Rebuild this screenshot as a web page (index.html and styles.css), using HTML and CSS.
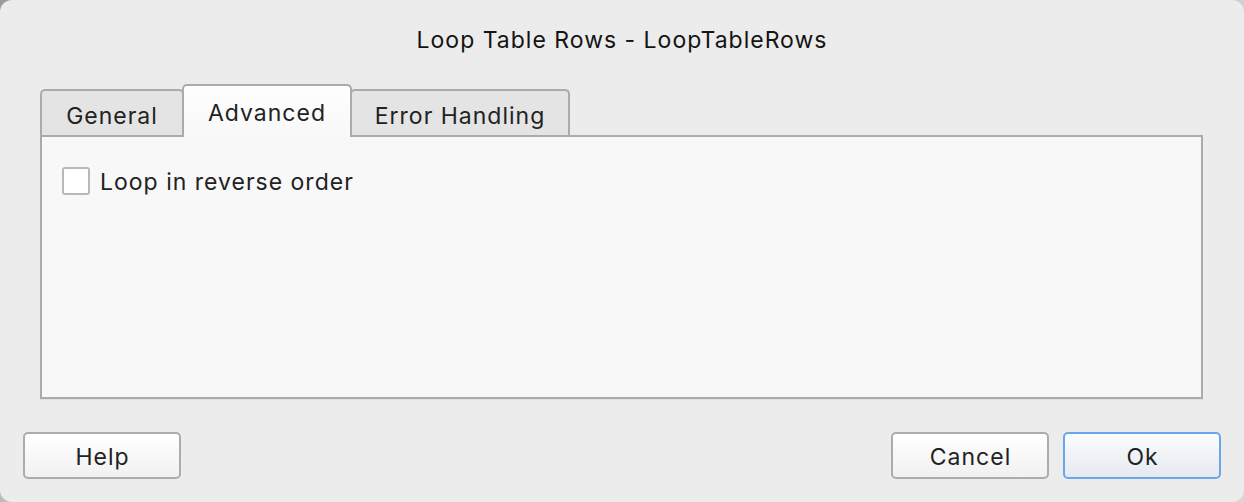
FILE: index.html
```html
<!DOCTYPE html>
<html>
<head>
<meta charset="utf-8">
<link rel="stylesheet" href="styles.css">
</head>
<body>
<div class="window">
  <div class="title">Loop Table Rows - LoopTableRows</div>
  <div class="tabbar">
    <div class="tab tab-general">General</div>
    <div class="tab tab-active">Advanced</div>
    <div class="tab tab-error">Error Handling</div>
  </div>
  <div class="panel">
    <label class="check">
      <span class="box"></span>
      <span class="check-label">Loop in reverse order</span>
    </label>
  </div>
  <div class="footer">
    <button class="btn">Help</button>
    <div class="spacer"></div>
    <button class="btn">Cancel</button>
    <button class="btn btn-default">Ok</button>
  </div>
</div>
</body>
</html>
```

FILE: styles.css
```css
html, body {
  margin: 0;
  padding: 0;
}
body {
  width: 1244px;
  height: 502px;
  background: linear-gradient(135deg, #9c9c9c 0%, #c8c8c8 40%, #d6d6d6 100%);
  font-family: "Inter", "Liberation Sans", sans-serif;
  overflow: hidden;
}
.window {
  width: 1244px;
  height: 502px;
  background: #ececec;
  border-radius: 12px;
  box-sizing: border-box;
  display: flex;
  flex-direction: column;
  letter-spacing: 1px;
}
.title {
  height: 58px;
  padding-top: 26px;
  line-height: 28px;
  text-align: center;
  font-size: 23px;
  color: #141414;
}
.tabbar {
  height: 51px;
  display: flex;
  align-items: flex-end;
  padding-left: 40px;
  position: relative;
  z-index: 2;
}
.tab {
  box-sizing: border-box;
  height: 46px;
  border: 2px solid #ababab;
  border-bottom: none;
  border-radius: 5px 5px 0 0;
  background: #e4e4e4;
  font-size: 23px;
  color: #222;
  display: flex;
  align-items: center;
  justify-content: center;
  padding-top: 6px;
}
.tab-general {
  width: 144px;
}
.tab-active {
  width: 170px;
  height: 53px;
  margin-left: -2px;
  margin-bottom: -2px;
  background: linear-gradient(#fefefe, #f8f8f8);
  padding-top: 2px;
  padding-bottom: 0;
}
.tab-error {
  width: 220px;
  margin-left: -2px;
}
.panel {
  box-sizing: border-box;
  height: 264px;
  margin: 0 41px 0 40px;
  border: 2px solid #ababab;
  background: #f8f8f8;
  padding: 29px 0 0 20px;
  box-shadow: 0 1px 0 #e0e0e0;
}
.check {
  display: flex;
  align-items: center;
  gap: 10px;
}
.box {
  box-sizing: border-box;
  width: 28px;
  height: 28px;
  border: 2px solid #b8b8b8;
  border-radius: 3px;
  background: #ffffff;
}
.check-label {
  font-size: 23px;
  color: #222;
  padding-top: 2px;
}
.footer {
  display: flex;
  padding: 33px 23px 0 23px;
  gap: 14px;
}
.spacer {
  flex: 1;
}
.btn {
  box-sizing: border-box;
  width: 158px;
  height: 47px;
  border: 2px solid #acacac;
  border-radius: 5px;
  background: linear-gradient(#ffffff, #f1f1f1);
  font-family: "Inter", "Liberation Sans", sans-serif;
  font-size: 23px;
  letter-spacing: 1px;
  color: #222;
  padding: 2px 0 0 1px;
}
.btn-default {
  border-color: #6aa6ea;
  background: linear-gradient(#fbfcfe, #e5e9ef);
}
```
